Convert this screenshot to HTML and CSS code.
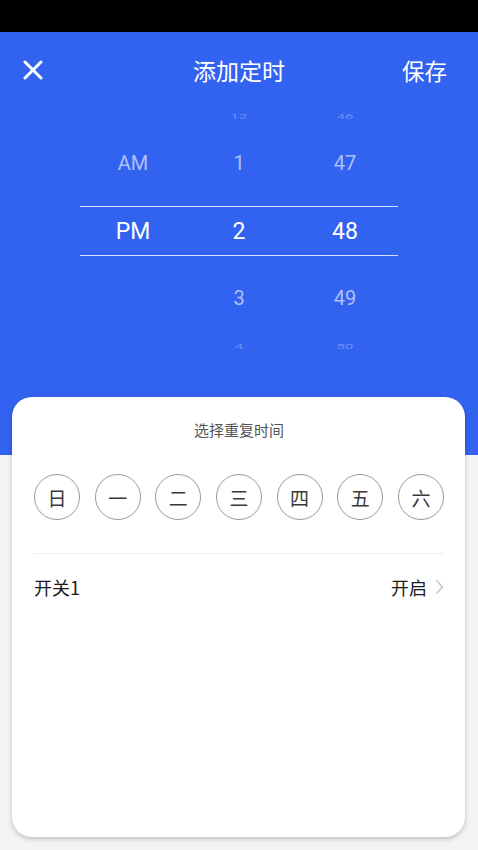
FILE: index.html
```html
<!DOCTYPE html>
<html lang="zh-CN">
<head>
    <meta charset="UTF-8">
    <meta name="viewport" content="width=device-width, initial-scale=1.0">
    <title>添加定时</title>
    <link rel="stylesheet" href="styles.css">
</head>
<body>
    <div class="status-bar"></div>
    <div class="topo">
        <div class="header">
            <span class="fechar">
                <svg width="20" height="20" viewBox="0 0 20 20">
                    <path d="M2 2 L18 18 M18 2 L2 18" stroke="#fff" stroke-width="3" stroke-linecap="round"/>
                </svg>
            </span>
            <h1 class="titulo">添加定时</h1>
            <span class="salvar">保存</span>
        </div>

        <div class="picker">
            <div class="linha mini">
                <span></span><span>12</span><span>46</span>
            </div>
            <div class="linha fraca">
                <span>AM</span><span>1</span><span>47</span>
            </div>
            <div class="linha ativa">
                <span>PM</span><span>2</span><span>48</span>
            </div>
            <div class="linha fraca">
                <span></span><span>3</span><span>49</span>
            </div>
            <div class="linha mini">
                <span></span><span>4</span><span>50</span>
            </div>
        </div>
    </div>

    <div class="cartao">
        <p class="subtitulo">选择重复时间</p>
        <div class="dias">
            <div class="dia">日</div>
            <div class="dia">一</div>
            <div class="dia">二</div>
            <div class="dia">三</div>
            <div class="dia">四</div>
            <div class="dia">五</div>
            <div class="dia">六</div>
        </div>
        <div class="item">
            <span>开关1</span>
            <span class="valor">开启
                <svg width="9" height="16" viewBox="0 0 9 16">
                    <path d="M1.5 1.5 L7.5 8 L1.5 14.5" fill="none" stroke="#c4c4c4" stroke-width="1.5"/>
                </svg>
            </span>
        </div>
    </div>
</body>
</html>
```

FILE: styles.css
```css
* {
    margin: 0;
    padding: 0;
    box-sizing: border-box;
}
body {
    font-family: Roboto, "Noto Sans CJK SC", sans-serif;
    background: #f4f4f4;
    width: 478px;
    height: 850px;
    overflow: hidden;
}
.status-bar {
    height: 32px;
    background: #000;
}
.topo {
    background: #3262f0;
    height: 423px;
    color: #fff;
}
.header {
    height: 76px;
    display: flex;
    align-items: center;
    justify-content: space-between;
    padding: 0 31px 0 23px;
    position: relative;
}
.fechar {
    display: flex;
    width: 20px;
    height: 20px;
}
.titulo {
    font-family: "Noto Sans CJK SC", sans-serif;
    font-weight: normal;
    font-size: 23px;
    position: absolute;
    left: 0;
    right: 0;
    text-align: center;
    pointer-events: none;
}
.salvar {
    font-family: "Noto Sans CJK SC", sans-serif;
    font-size: 22.5px;
}
.picker {
    width: 318px;
    margin: 0 auto;
    display: grid;
    grid-template-rows: 16px 82px 50px 82px 16px;
}
.linha {
    display: grid;
    grid-template-columns: repeat(3, 106px);
    align-items: center;
    text-align: center;
}
.linha.mini {
    font-size: 15px;
    color: rgba(255, 255, 255, 0.3);
}
.linha.mini span {
    display: block;
    transform: scaleY(0.45);
}
.linha.fraca {
    font-size: 20px;
    color: rgba(255, 255, 255, 0.62);
    padding-bottom: 4px;
}
.linha.fraca:nth-child(4) {
    padding-bottom: 0;
    padding-top: 2px;
}
.linha.ativa {
    font-size: 23px;
    color: #fff;
    border-top: 1px solid rgba(255, 255, 255, 0.8);
    border-bottom: 1px solid rgba(255, 255, 255, 0.8);
}
.cartao {
    margin: -58px 13px 0 12px;
    height: 440px;
    background: #fff;
    border-radius: 20px;
    box-shadow: 0 2px 5px rgba(0, 0, 0, 0.22);
    padding: 23px 21px 0 22px;
    font-family: "Noto Sans CJK SC", sans-serif;
}
.subtitulo {
    text-align: center;
    font-size: 15px;
    line-height: 20px;
    color: #555;
}
.dias {
    display: flex;
    justify-content: space-between;
    margin-top: 34px;
    padding-bottom: 33px;
    border-bottom: 1px solid #ececec;
}
.dia {
    width: 46px;
    height: 46px;
    border: 1.5px solid #9a9a9a;
    border-radius: 50%;
    display: flex;
    align-items: center;
    justify-content: center;
    font-size: 19px;
    color: #3a3a3a;
}
.item {
    height: 66px;
    display: flex;
    align-items: center;
    justify-content: space-between;
    font-size: 18px;
    color: #1a1a1a;
}
.valor {
    display: flex;
    align-items: center;
    gap: 8px;
}
```
